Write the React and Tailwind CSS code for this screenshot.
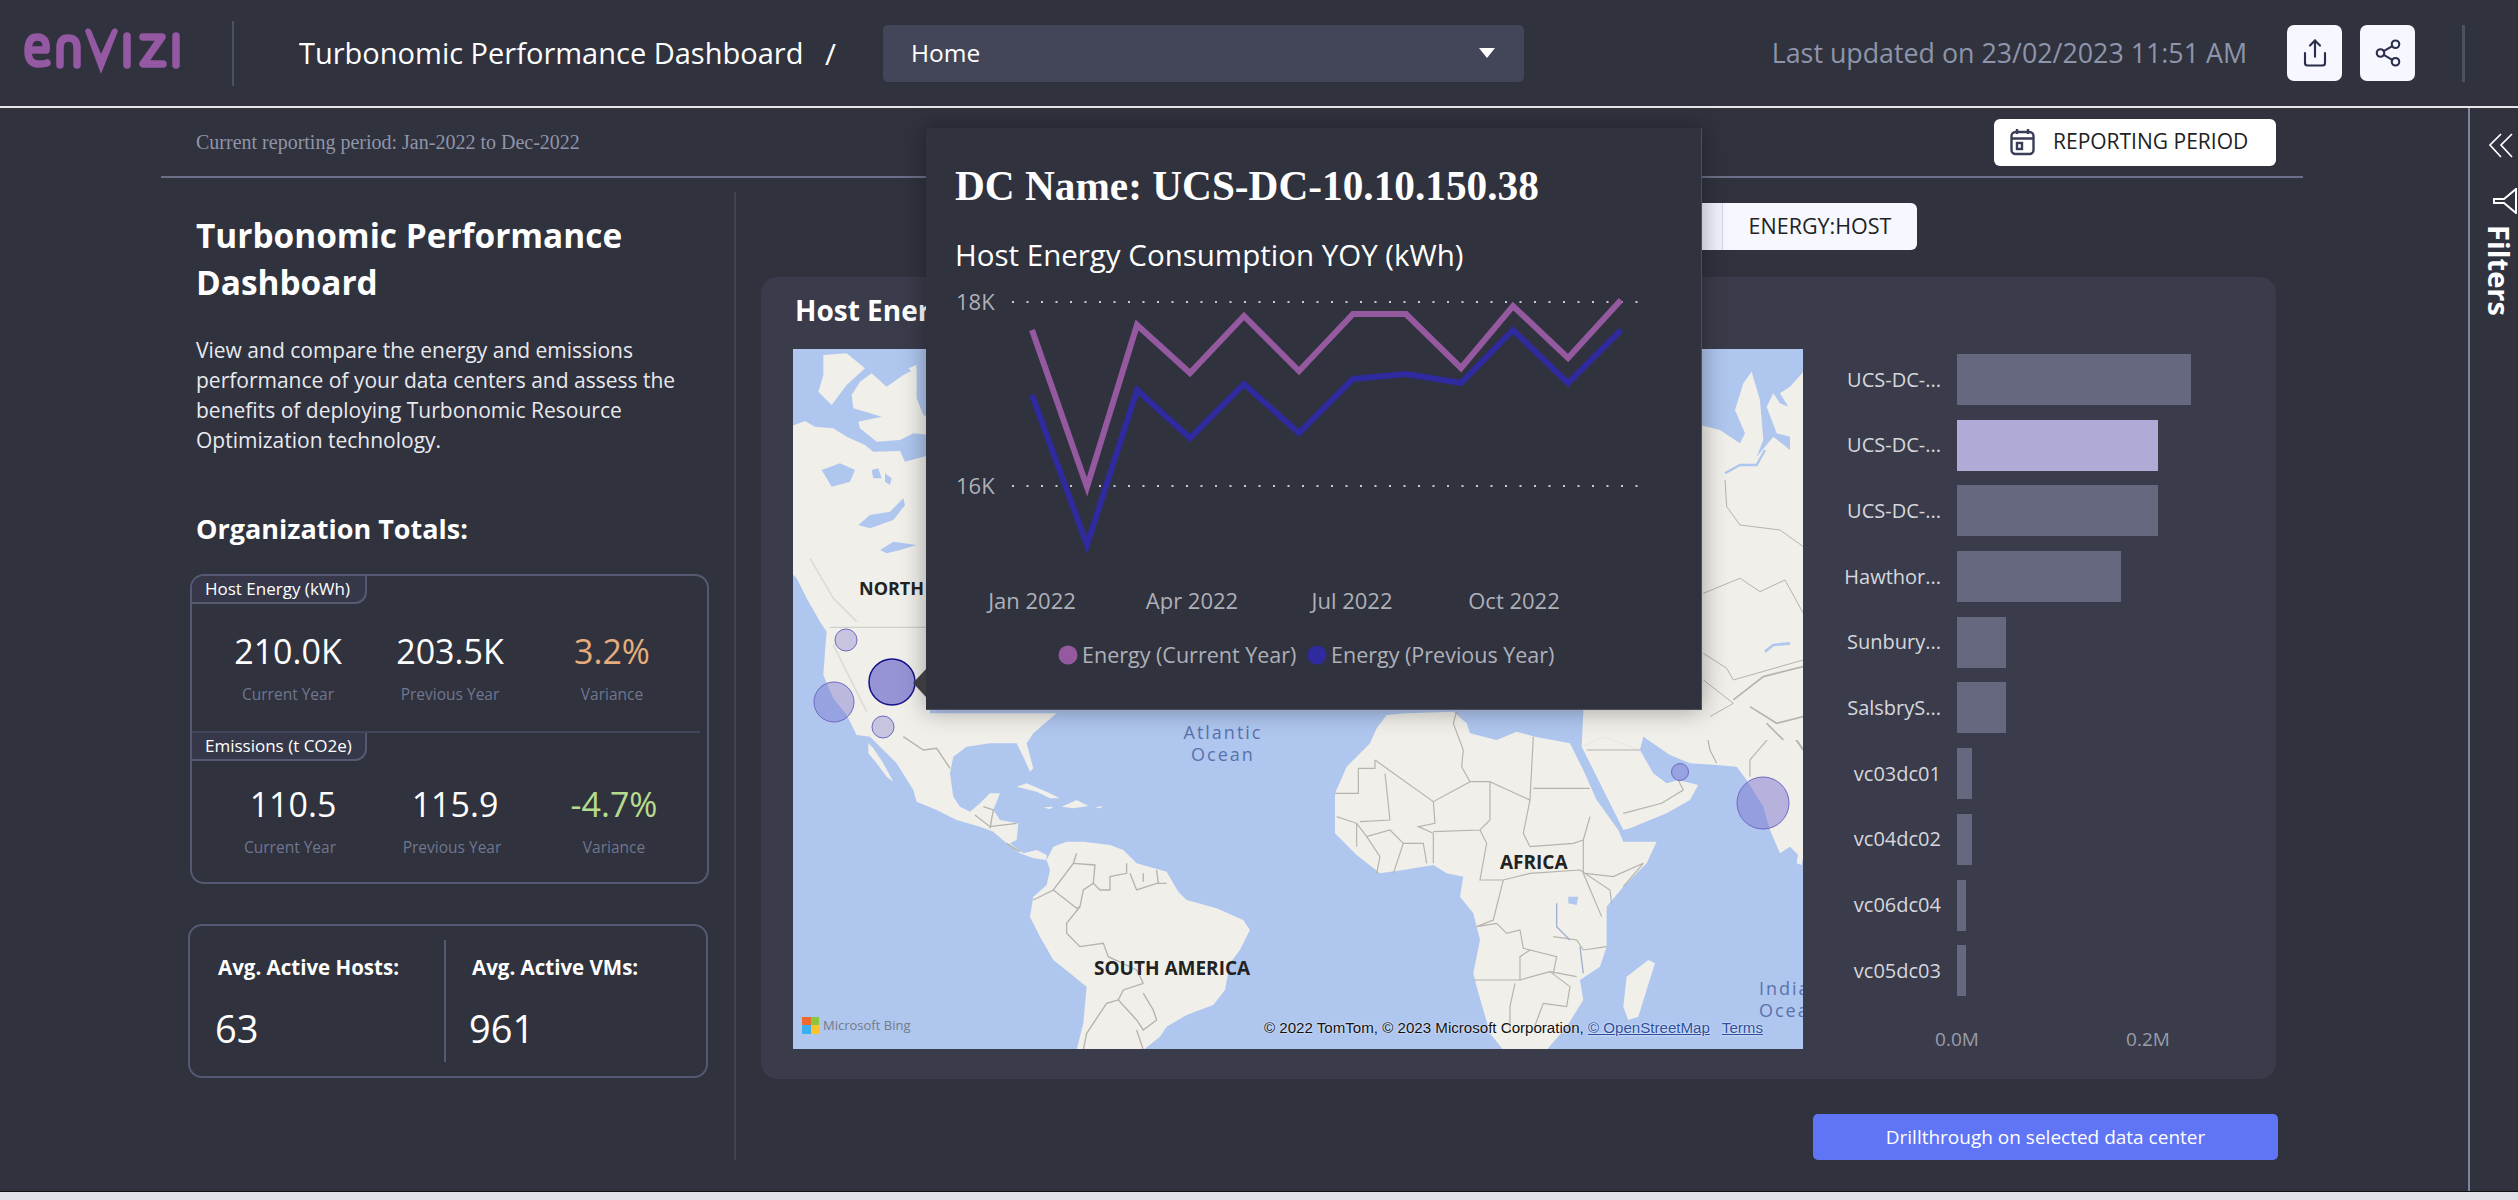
import React from "react";
import { Share, Share2 } from "lucide-react";

const sans = "font-['Open_Sans',sans-serif]";

const bars = [
  { label: "UCS-DC-...", width: "w-[234px]", color: "bg-[#666880]" },
  { label: "UCS-DC-...", width: "w-[201px]", color: "bg-[#aeabd6]" },
  { label: "UCS-DC-...", width: "w-[201px]", color: "bg-[#666880]" },
  { label: "Hawthor...", width: "w-[164px]", color: "bg-[#666880]" },
  { label: "Sunbury...", width: "w-[49px]", color: "bg-[#666880]" },
  { label: "SalsbryS...", width: "w-[49px]", color: "bg-[#666880]" },
  { label: "vc03dc01", width: "w-[15px]", color: "bg-[#666880]" },
  { label: "vc04dc02", width: "w-[15px]", color: "bg-[#666880]" },
  { label: "vc06dc04", width: "w-[9px]", color: "bg-[#666880]" },
  { label: "vc05dc03", width: "w-[9px]", color: "bg-[#666880]" },
];

const current = [[1032, 330], [1087, 487], [1137, 325], [1190, 373], [1244, 316], [1299, 371], [1353, 314], [1406, 314], [1461, 368], [1513, 306], [1568, 358], [1621, 300]];
const previous = [[1032, 395], [1087, 545], [1137, 390], [1190, 438], [1244, 384], [1299, 433], [1353, 379], [1406, 374], [1461, 383], [1513, 330], [1568, 383], [1621, 330]];

function Logo() {
  return (
    <svg width="170" height="60" viewBox="20 25 170 60" fill="none" stroke="#9558a3" strokeWidth="7.5" strokeLinecap="round" strokeLinejoin="round">
      <path d="M29 52 H46 C47 43 44 39 37 39 C30 39 28 45 28 53 C28 62 32 66 38 66 C42 66 45 66 47 65" />
      <path d="M60 67 V50 C60 43 63 40 68 40 C74 40 77 43 77 50 V67" />
      <path d="M85 33 Q87 28 91 32 L101 56 L112 32 Q116 28 118 33 L101 76 Z" fill="#9558a3" stroke="none" />
      <path d="M127 38 V67" />
      <path d="M143 39 H162 L143 66 H163" />
      <path d="M176 38 V67" />
    </svg>
  );
}

function Header() {
  return (
    <div className="h-[106px] flex items-center shrink-0 bg-[#30323e]">
      <div className="w-[20px]" />
      <Logo />
      <div className="ml-[42px] w-[2px] h-[65px] bg-[#4d5060]" />
      <div className="ml-[65px] w-[507px] text-white text-[29px] whitespace-nowrap">Turbonomic Performance Dashboard</div>
      <div className="ml-[19px] w-[10px] text-white text-[30px]">/</div>
      <div className="ml-[48px] w-[641px] h-[57px] rounded-[5px] bg-[#434659] flex items-center justify-between pl-[28px] pr-[29px] text-white text-[24.5px]">
        Home
        <svg width="16" height="10" viewBox="0 0 16 10"><path d="M0 0 H16 L8 10 Z" fill="#fff" /></svg>
      </div>
      <div className="ml-[233px] w-[490px] text-right text-[#8e95aa] text-[26.8px] whitespace-nowrap">Last updated on 23/02/2023 11:51 AM</div>
      <div className="ml-[40px] w-[55px] h-[56px] rounded-[7px] bg-[#f6f7ff] flex items-center justify-center">
        <Share size={30} strokeWidth={1.7} color="#2b2e4a" />
      </div>
      <div className="ml-[18px] w-[55px] h-[56px] rounded-[7px] bg-[#f6f7ff] flex items-center justify-center">
        <Share2 size={30} strokeWidth={1.7} color="#2b2e4a" />
      </div>
      <div className="ml-[47px] w-[3px] h-[57px] bg-[#4d5060]" />
    </div>
  );
}

function Stat({ value, label, tone }) {
  return (
    <div className="w-[162px] flex flex-col items-center">
      <div className={`text-[34px] leading-[50px] ${tone}`}>{value}</div>
      <div className="mt-[6px] text-[15.5px] leading-[24px] text-[#6f7690]">{label}</div>
    </div>
  );
}

function TabLabel({ children }) {
  return (
    <div className="w-[175px] h-[28px] border-r-2 border-b-2 border-[#555a72] rounded-br-[12px] bg-[#363849] text-white text-[17px] leading-[26px] pl-[13px] whitespace-nowrap">
      {children}
    </div>
  );
}

function LeftColumn() {
  return (
    <div className="w-[575px] h-[968px] shrink-0 border-r-2 border-[#41444f] pt-[20px]">
      <div className="pl-[35px] text-white font-bold text-[33.4px] leading-[47px] w-[500px]">Turbonomic Performance Dashboard</div>
      <p className="pl-[35px] mt-[29px] w-[530px] text-[#e8e9ee] text-[21px] leading-[30px]">
        View and compare the energy and emissions performance of your data centers and assess the benefits of deploying Turbonomic Resource Optimization technology.
      </p>
      <div className="pl-[35px] mt-[56px] text-white font-bold text-[27px] leading-[36px]">Organization Totals:</div>
      <div className="ml-[29px] mt-[27px] w-[519px] h-[310px] border-2 border-[#555a72] rounded-[14px] overflow-hidden">
        <TabLabel>Host Energy (kWh)</TabLabel>
        <div className="flex pl-[15px] mt-[22px]">
          <Stat value="210.0K" label="Current Year" tone="text-white" />
          <Stat value="203.5K" label="Previous Year" tone="text-white" />
          <Stat value="3.2%" label="Variance" tone="text-[#e5ad7c]" />
        </div>
        <div className="mt-[25px] w-[508px] border-t-2 border-[#43465a]" />
        <TabLabel>Emissions (t CO2e)</TabLabel>
        <div className="flex pl-[17px] mt-[18px]">
          <Stat value="110.5" label="Current Year" tone="text-white ml-[6px]" />
          <Stat value="115.9" label="Previous Year" tone="text-white ml-[6px]" />
          <Stat value="-4.7%" label="Variance" tone="text-[#b7dc8e]" />
        </div>
      </div>
      <div className="ml-[27px] mt-[40px] w-[520px] h-[154px] border-2 border-[#555a72] rounded-[14px] flex items-stretch">
        <div className="w-[256px] border-r-2 border-[#555a72] my-[14px] pl-[28px] pt-[12px]">
          <div className="text-white font-bold text-[20.5px] leading-[30px] whitespace-nowrap">Avg. Active Hosts:</div>
          <div className="mt-[21px] -ml-[3px] text-white text-[38px] leading-[50px]">63</div>
        </div>
        <div className="my-[14px] pl-[26px] pt-[12px]">
          <div className="text-white font-bold text-[20.5px] leading-[30px] whitespace-nowrap">Avg. Active VMs:</div>
          <div className="mt-[21px] -ml-[3px] text-white text-[38px] leading-[50px]">961</div>
        </div>
      </div>
    </div>
  );
}

function WorldMap() {
  const land = "#f0efea";
  const water = "#afc6ef";
  const border = "#b4b3ac";
  return (
    <svg className="absolute inset-0 blur-[0.7px]" width="1010" height="700" viewBox="793 349 1010 700">
      <rect x="793" y="349" width="1010" height="700" fill={water} />
      {/* north america, traced at 3x */}
      <g transform="translate(790 345) scale(0.3333)">
        <path fill={land} d="M0 245 L45 228 L75 245 L130 250 L170 275 L225 300 L250 320 L330 318 L345 350 L420 330 L420 1130 L200 1170 L170 1110 L130 1060 L100 990 L105 920 L110 860 L90 830 L50 760 L20 700 L0 680Z" />
        <path fill={land} d="M100 30 L170 25 L225 70 L170 120 L125 180 L85 140 L100 90Z" />
        <path fill={land} d="M210 110 L245 85 L290 125 L340 90 L380 70 L380 160 L400 210 L420 220 L420 270 L370 265 L330 285 L260 290 L210 250 L205 230 L275 215 L190 190 L185 150Z" />
        <path fill={land} d="M355 70 L380 60 L375 90Z" />
        <path fill={water} d="M95 375 L150 355 L195 375 L180 410 L125 425 L110 400Z" />
        <path fill={water} d="M205 540 L240 510 L300 500 L340 460 L345 480 L310 525 L240 550Z" />
        <path fill={water} d="M270 615 L310 590 L380 600 L330 615 L290 625Z" />
        <path fill={water} d="M245 375 L265 370 L275 400 L250 400Z" />
        <path fill={water} d="M285 385 L305 400 L300 420 L285 410Z" />
        <path fill="none" stroke={border} strokeWidth="2" d="M120 847 H420" />
        <path fill="none" stroke="#dcdbd4" strokeWidth="5" d="M60 640 L130 760 L200 830" />
        <path fill="none" stroke="#dcdbd4" strokeWidth="5" d="M130 900 L180 1000 L230 1100" />
      </g>
      {/* central and south america */}
      <g transform="translate(790 700) scale(0.3333)">
        <path fill={land} d="M220 40 L800 40 L730 100 L710 130 L730 205 L720 215 L700 170 L680 130 L600 130 L530 140 L490 170 L480 220 L490 290 L510 320 L540 335 L570 310 L600 280 L630 280 L610 330 L630 360 L685 370 L680 420 L660 430 L700 460 L740 450 L770 465 L770 480 L730 475 L690 460 L650 430 L610 395 L570 380 L500 360 L440 330 L380 305 L370 270 L320 190 L240 110 L200 105 L170 30Z" />
        <path fill={land} d="M235 130 L250 145 L280 190 L310 245 L290 230 L260 190 L235 160Z" />
        <path fill={land} d="M680 260 L710 250 L770 275 L810 295 L780 295 L740 275Z" />
        <path fill={land} d="M815 320 L860 300 L895 318 L850 325Z" />
        <path fill={land} d="M760 322 L790 320 L780 328Z" />
        <path fill={land} d="M915 322 L940 318 L930 325Z" />
        <path fill={land} d="M770 480 L790 440 L830 425 L880 425 L960 435 L1000 450 L1040 490 L1130 515 L1165 575 L1190 600 L1280 625 L1360 660 L1380 690 L1350 750 L1320 790 L1305 870 L1270 915 L1190 945 L1130 980 L1110 1010 L1060 1050 L860 1050 L880 970 L890 860 L840 820 L790 780 L750 710 L720 650 L730 590 L770 555 L780 510Z" />
        <g fill="none" stroke={border} strokeWidth="4">
          <path d="M340 110 L400 150 L440 145 L480 205" />
          <path d="M555 345 L600 380 L680 370" />
          <path d="M580 320 L610 330 L600 385" />
          <path d="M650 430 L690 455" />
          <path d="M850 490 L915 495 L910 550 L880 570 L870 620 L830 670 L830 700 L870 740 L940 730 L955 770 L1040 810 L1060 850" />
          <path d="M1060 850 L1000 870 L985 900 L1040 960 L1060 990 L1100 960 L1090 930 L1060 880" />
          <path d="M860 460 L850 490 L790 570 L730 600" />
          <path d="M790 570 L860 625 L870 620" />
          <path d="M910 550 L930 570 L960 570 L960 530 L1010 520 L1010 490" />
          <path d="M1020 520 L1040 570 L1100 550 L1130 550" />
          <path d="M1100 510 L1105 550" />
          <path d="M1060 520 L1060 545" />
          <path d="M985 900 L950 910 L890 1000 L880 1050" />
          <path d="M1040 990 L1060 1050" />
        </g>
      </g>
      {/* africa, arabia, india */}
      <g transform="translate(1290 700) scale(0.3333)">
        <path fill={land} d="M290 45 L350 40 L490 35 L530 70 L540 100 L620 120 L680 95 L735 110 L840 130 L880 210 L920 300 L985 390 L1000 425 L1100 425 L1070 490 L1000 560 L950 620 L950 740 L930 800 L870 840 L880 900 L830 980 L770 1050 L640 1050 L600 1000 L560 860 L550 820 L570 720 L550 640 L510 590 L520 530 L470 520 L430 495 L340 510 L270 520 L200 465 L135 400 L135 280 L170 200 L240 130 L260 85Z" />
        <path fill={land} d="M1075 780 L1095 790 L1070 870 L1045 950 L1015 960 L1000 920 L1010 830Z" />
        <path fill={land} d="M875 140 L940 110 L1050 150 L1090 220 L1130 250 L1165 240 L1225 255 L1200 300 L1130 340 L1020 385 L1000 390 L960 310 L900 190Z" />
        <path fill={land} d="M880 40 L880 0 L1030 0 L1060 110 L1050 150 L940 110 L875 140Z" />
        <path fill={land} d="M1000 0 L1560 0 L1560 500 L1500 440 L1470 460 L1440 390 L1420 320 L1370 240 L1340 200 L1280 195 L1200 190 L1140 165 L1060 110 L1040 60 L1020 30Z" />
        <path fill={land} d="M1525 455 L1540 465 L1535 495 L1520 490Z" />
        <g fill="none" stroke={border} strokeWidth="3.5">
          <path d="M255 180 L430 305 L540 245 L515 200 L520 150 L490 70 L500 35" />
          <path d="M205 205 L255 205 L255 180" />
          <path d="M135 280 L205 280 L205 205" />
          <path d="M285 220 L300 360 L210 365" />
          <path d="M430 305 L435 370 L385 380 L430 400 L430 490" />
          <path d="M540 245 L600 245 L600 360 L570 390 L430 395" />
          <path d="M600 245 L720 300 L730 110" />
          <path d="M730 265 L900 265" />
          <path d="M720 300 L700 400 L720 440 L850 430 L880 420 L900 350" />
          <path d="M570 390 L590 430 L570 540 L640 540 L720 520 L870 510 L960 570 L965 610" />
          <path d="M640 540 L610 660 L560 680 L620 670 L650 700 L690 690 L700 745 L720 750 L690 770 L690 840 L550 840" />
          <path d="M690 840 L780 815 L860 830" />
          <path d="M675 850 L660 920 L660 1000" />
          <path d="M790 710 L860 720 L880 750 L950 740" />
          <path d="M720 750 L800 770 L790 820" />
          <path d="M780 815 L840 860 L830 920 L760 910 L730 990" />
          <path d="M880 420 L880 520 L935 650" />
          <path d="M1000 560 L1060 490 L970 530 L885 520" />
          <path d="M310 520 L340 430 L400 430 L410 490" />
          <path d="M340 430 L300 390 L230 410 L200 370" />
          <path d="M260 520 L270 470 L230 410" />
          <path d="M140 350 L200 370 L200 440" />
          <path d="M890 150 L1050 150" />
          <path d="M1000 340 L1115 310 L1180 270 L1165 240" />
          <path d="M1440 110 L1380 180 L1380 230" />
          <path d="M1250 100 L1260 150 L1280 190" />
        </g>
        <path fill={water} d="M835 590 L865 590 L860 615 L835 610Z" />
        <path fill="none" stroke="#9fb0cf" strokeWidth="4" d="M800 610 L800 680 L840 720 M870 740 L880 820" />
        <path fill="none" stroke="#b5b5ae" strokeWidth="6" d="M1380 70 L1450 20 L1540 150 M1240 60 L1300 110 M1420 60 L1500 110" />
      </g>
      {/* russia and central asia */}
      <g transform="translate(1690 340) scale(0.3333)">
        <path fill={land} d="M30 255 L90 270 L150 310 L165 280 L135 210 L160 130 L185 95 L210 180 L220 300 L200 350 L250 290 L300 330 L300 290 L260 280 L230 200 L250 160 L270 190 L295 200 L270 160 L300 140 L345 90 L345 1200 L30 1200Z" />
        <path fill="none" stroke={water} strokeWidth="7" d="M105 400 L150 375 L200 375 L225 330" />
        <g fill="none" stroke={border} strokeWidth="3">
          <path d="M105 420 L110 500 L150 555 L270 570 L340 620" />
          <path d="M40 760 L150 715 L210 755 L285 720 L340 820" />
          <path d="M40 940 L110 985 L130 1020 L200 1000 L340 960" />
          <path d="M40 1020 L130 1090 L60 1130" />
        </g>
        <path fill="none" stroke={water} strokeWidth="8" d="M225 935 L250 915 L300 910" />
        <path fill="none" stroke="#b5b5ae" strokeWidth="5" d="M130 1080 L220 1010 L340 980 M180 1100 L260 1150 L340 1130 M230 1150 L280 1200" />
      </g>
      {/* data center bubbles */}
      <g>
        <circle cx="846" cy="640" r="11" fill="#7b76cf" fillOpacity="0.35" stroke="#6f6ac4" />
        <circle cx="834" cy="702" r="20" fill="#7b76cf" fillOpacity="0.45" stroke="#6f6ac4" />
        <circle cx="883" cy="727" r="11" fill="#7b76cf" fillOpacity="0.35" stroke="#6f6ac4" />
        <circle cx="1680" cy="772" r="8.5" fill="#7b76cf" fillOpacity="0.45" stroke="#6f6ac4" />
        <circle cx="1763" cy="803" r="26" fill="#7b76cf" fillOpacity="0.5" stroke="#6f6ac4" />
        <circle cx="892" cy="682" r="23" fill="#5c56c8" fillOpacity="0.6" stroke="#14108a" strokeWidth="1.5" />
      </g>
    </svg>
  );
}

function MapPanel() {
  return (
    <div className="relative w-[1010px] h-[700px] shrink-0 overflow-hidden">
      <WorldMap />
      <div className="absolute left-[66px] top-[228px] text-[#222] font-bold text-[18px] leading-[22px] whitespace-nowrap">NORTH AMERICA</div>
      <div className="absolute left-[386px] top-[372px] w-[88px] text-center text-[#5a72ac] text-[18px] leading-[22px] tracking-[2px]">Atlantic Ocean</div>
      <div className="absolute left-[301px] top-[608px] text-[#222] font-bold text-[19px] leading-[22px] whitespace-nowrap">SOUTH AMERICA</div>
      <div className="absolute left-[707px] top-[502px] text-[#222] font-bold text-[19px] leading-[22px]">AFRICA</div>
      <div className="absolute left-[966px] top-[628px] text-[#5a72ac] text-[18px] leading-[22px] tracking-[2px]">Indian<br />Ocean</div>
      <div className="absolute left-[9px] top-[667px] flex items-center gap-[4px]">
        <div className="w-[17px] h-[17px] grid grid-cols-2">
          <div className="bg-[#ee6a2f]" />
          <div className="bg-[#8cc63f]" />
          <div className="bg-[#3faef0]" />
          <div className="bg-[#fcc42b]" />
        </div>
        <div className="text-[#727c88] text-[13px] leading-[18px] whitespace-nowrap">Microsoft Bing</div>
      </div>
      <div className="absolute left-[471px] top-[670px] font-['Liberation_Sans',sans-serif] text-[15.1px] leading-[18px] text-[#111] whitespace-nowrap [text-shadow:0_0_2px_#fff]">
        © 2022 TomTom, © 2023 Microsoft Corporation, <span className="underline text-[#2c4f9e]">© OpenStreetMap</span>
        <span className="underline text-[#2c4f9e] ml-[12px]">Terms</span>
      </div>
    </div>
  );
}

function BarChart() {
  return (
    <div className="w-[440px] pt-[5px]">
      <div className="flex flex-col gap-[14.7px]">
        {bars.map((bar, index) => (
          <div className="flex items-center h-[51px]" key={index}>
            <div className="w-[138px] text-right text-[20px] text-[#d6d7dc] whitespace-nowrap">{bar.label}</div>
            <div className={`ml-[15.5px] h-[51px] ${bar.width} ${bar.color}`} />
          </div>
        ))}
      </div>
      <div className="flex pl-[124px] gap-[131px] mt-[31px] text-[19px] leading-[24px] text-[#9a9ca8]">
        <div className="w-[60px] text-center">0.0M</div>
        <div className="w-[60px] text-center">0.2M</div>
      </div>
    </div>
  );
}

function RightColumn() {
  return (
    <div className="pl-[25px] pt-[11px]">
      <div className="w-[1156px] flex justify-end">
        <div className="w-[60px] h-[47px] rounded-l-[6px] bg-[#f1f2fc] border-r border-[#d5d6ee]" />
        <div className="w-[194px] h-[47px] rounded-r-[6px] bg-[#f6f7ff] flex items-center justify-center text-[#222] text-[21.5px] whitespace-nowrap">ENERGY:HOST</div>
      </div>
      <div className="mt-[27px] w-[1515px] h-[802px] rounded-[16px] bg-[#3a3c4b] pl-[32px] pt-[14px]">
        <div className="pl-[2px] text-white font-bold text-[28px] leading-[38px] whitespace-nowrap">Host Energy</div>
        <div className="flex mt-[20px]">
          <MapPanel />
          <BarChart />
        </div>
      </div>
      <div className="mt-[35px] ml-[1052px] w-[465px] h-[46px] rounded-[5px] bg-[#5f75f5] flex items-center justify-center text-white text-[19px]">
        Drillthrough on selected data center
      </div>
    </div>
  );
}

function Tooltip() {
  const points = (list) => list.map((p) => p.join(",")).join(" ");
  return (
    <div className="absolute left-[926px] top-[128px] w-[776px] h-[582px] bg-[#30323e] border-r border-b border-[#4c4e59] shadow-[0_0_24px_rgba(0,0,0,0.35)]">
      <svg className="absolute left-[-13px] top-[541px]" width="13" height="28" viewBox="0 0 13 28"><path d="M13 0 V28 L0 14 Z" fill="#3c3c3e" /></svg>
      <div className="pl-[29px] pt-[35px] font-['Liberation_Serif',serif] font-bold text-white text-[41.3px] leading-[46px] whitespace-nowrap">DC Name: UCS-DC-10.10.150.38</div>
      <div className="pl-[29px] mt-[26px] text-white text-[29.5px] leading-[40px] whitespace-nowrap">Host Energy Consumption YOY (kWh)</div>
      <svg className="block mt-[1px]" width="776" height="434" viewBox="926 276 776 434">
        <g stroke="#c9cad0" strokeWidth="2" strokeDasharray="2 12.5">
          <line x1="1012" y1="302" x2="1642" y2="302" />
          <line x1="1012" y1="486" x2="1642" y2="486" />
        </g>
        <polyline points={points(previous)} fill="none" stroke="#2f2a9e" strokeWidth="6" />
        <polyline points={points(current)} fill="none" stroke="#95599f" strokeWidth="6" />
        <g fill="#aeb0b8" fontSize="22">
          <text x="956" y="310">18K</text>
          <text x="956" y="494">16K</text>
          <text x="1032" y="609" textAnchor="middle">Jan 2022</text>
          <text x="1192" y="609" textAnchor="middle">Apr 2022</text>
          <text x="1352" y="609" textAnchor="middle">Jul 2022</text>
          <text x="1514" y="609" textAnchor="middle">Oct 2022</text>
          <text x="1082" y="663" fontSize="21.5">Energy (Current Year)</text>
          <text x="1331" y="663" fontSize="21.5">Energy (Previous Year)</text>
        </g>
        <circle cx="1068" cy="655" r="9.5" fill="#95599f" />
        <circle cx="1317" cy="655" r="9.5" fill="#2f2a9e" />
      </svg>
    </div>
  );
}

function Sidebar() {
  return (
    <div className="w-[50px] h-full border-l-2 border-[#7d84a0] flex flex-col items-start">
      <svg className="ml-[18px] mt-[25px]" width="26" height="26" viewBox="0 0 26 26" fill="none" stroke="#fff" strokeWidth="1.7">
        <path d="M13 1 L2 12 L13 24" />
        <path d="M24 1 L13 12 L24 24" />
      </svg>
      <svg className="ml-[22px] mt-[29px]" width="26" height="26" viewBox="0 0 26 26" fill="none" stroke="#fff" strokeWidth="2">
        <path d="M24 1 V25 L12 15 H2 V11 H12 Z" />
      </svg>
      <div className="ml-[12px] mt-[11px] [writing-mode:vertical-rl] text-white font-bold text-[29px] leading-[34px]">Filters</div>
    </div>
  );
}

export default function App() {
  return (
    <div className={`relative w-[2518px] h-[1200px] overflow-hidden flex flex-col bg-[#30323e] ${sans}`}>
      <Header />
      <div className="h-[2px] shrink-0 bg-[#e6e6e8]" />
      <div className="h-[1083px] shrink-0 flex">
        <div className="flex-1 pl-[161px]">
          <div className="w-[2142px] h-[70px] border-b-2 border-[#6b7088] flex items-center justify-between pr-[27px]">
            <div className="pl-[35px] font-['Liberation_Serif',serif] text-[20px] text-[#8f95a8]">Current reporting period: Jan-2022 to Dec-2022</div>
            <div className="w-[282px] h-[47px] rounded-[6px] bg-white flex items-center pl-[16px] gap-[18px] text-[#222] text-[21px] whitespace-nowrap">
              <svg width="25" height="28" viewBox="0 0 25 28" fill="none" stroke="#3a3d58" strokeWidth="2.4">
                <rect x="1.5" y="4" width="22" height="22" rx="4" />
                <path d="M1.5 10.5 H23.5 M7 1 V6 M18 1 V6" />
                <rect x="7" y="15" width="5" height="6" />
              </svg>
              REPORTING PERIOD
            </div>
          </div>
          <div className="mt-[14px] flex">
            <LeftColumn />
            <RightColumn />
          </div>
        </div>
        <Sidebar />
      </div>
      <div className="flex-1 border-t border-[#111] bg-[#dfe1e6]" />
      <Tooltip />
    </div>
  );
}
